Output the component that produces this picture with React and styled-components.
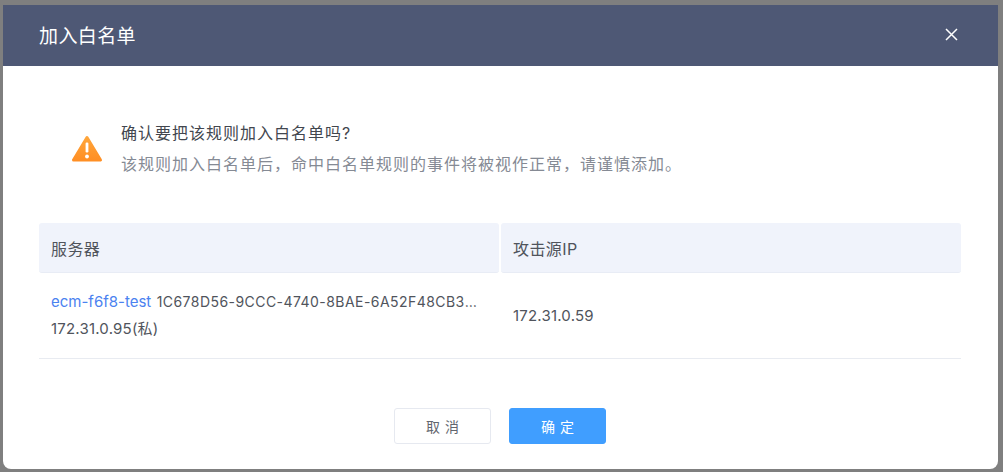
import React from "react";
import styled, { createGlobalStyle } from "styled-components";

const GlobalStyle = createGlobalStyle`
  html, body {
    margin: 0;
    padding: 0;
    height: 100%;
    background: #7f7f7f;
    font-family: "Inter", "Noto Sans CJK SC", sans-serif;
  }
`;

const Overlay = styled.div`
  box-sizing: border-box;
  width: 1003px;
  height: 472px;
  padding: 5px 5px 3px 3px;
  overflow: hidden;
`;
const Modal = styled.div`
  display: flex;
  flex-direction: column;
  width: 995px;
  height: 464px;
  background: #fff;
  border-radius: 0 0 8px 8px;
  overflow: hidden;
`;
const Header = styled.div`
  flex: none;
  display: flex;
  align-items: center;
  justify-content: space-between;
  box-sizing: border-box;
  height: 61px;
  padding: 0 40px 2px 36px;
  background: #4e5875;
  color: #fff;
`;
const Title = styled.div`
  font-size: 19px;
  letter-spacing: 0.4px;
`;
const Close = styled.button`
  display: flex;
  padding: 0;
  border: none;
  background: none;
  cursor: pointer;
`;
const Body = styled.div`
  flex: 1;
  padding: 0 37px 0 36px;
`;
const Notice = styled.div`
  display: flex;
  align-items: center;
  gap: 18px;
  box-sizing: border-box;
  height: 157px;
  padding: 8px 0 0 32px;
`;
const NoticeText = styled.div`
  display: flex;
  flex-direction: column;
  gap: 9px;
  font-size: 16px;
  line-height: 22px;
  letter-spacing: 1px;
`;
const Heading = styled.div`
  color: #42464e;
`;
const Hint = styled.div`
  color: #858a94;
`;
const Table = styled.div`
  display: grid;
  grid-template-columns: 461px 461px;
  width: 922px;
`;
const HeadCell = styled.div`
  display: flex;
  align-items: center;
  height: 50px;
  box-sizing: border-box;
  padding: 0 12px;
  background: #f0f3fb;
  border-bottom: 1px solid #e8ecf5;
  border-radius: 3px;
  font-size: 16px;
  letter-spacing: 0.4px;
  color: #50545c;
  margin-right: ${(p) => (p.$gap ? "1px" : "0")};
  margin-left: ${(p) => (p.$gap ? "0" : "1px")};
`;
const Cell = styled.div`
  display: flex;
  flex-direction: column;
  justify-content: center;
  gap: 11px;
  height: 86px;
  box-sizing: border-box;
  padding: 0 ${(p) => (p.$last ? "12px 0 13px" : "16px 0 12px")};
  border-bottom: 1px solid #e8ebf1;
  font-size: 14px;
  line-height: 16px;
  color: #50545c;
`;
const Line = styled.div`
  white-space: nowrap;
  overflow: hidden;
  text-overflow: ellipsis;
  letter-spacing: 0.45px;
`;
const Address = styled.div`
  font-size: 15px;
  letter-spacing: 0.2px;
`;
const ServerLink = styled.span`
  margin-right: 1px;
  color: #4b82f0;
  font-size: 15px;
  letter-spacing: 0;
`;
const Footer = styled.div`
  flex: none;
  display: flex;
  justify-content: center;
  gap: 18px;
  height: 61px;
  padding-right: 1px;
`;
const Button = styled.button`
  width: 97px;
  height: 36px;
  box-sizing: border-box;
  padding: 0 0 0 5px;
  border-radius: 3px;
  border: 1px solid ${(p) => (p.$primary ? "#409eff" : "#e6e9f0")};
  background: ${(p) => (p.$primary ? "#409eff" : "#fff")};
  color: ${(p) => (p.$primary ? "#fff" : "#62666e")};
  font-family: inherit;
  font-size: 14px;
  letter-spacing: 5px;
  cursor: pointer;
`;

const WarningIcon = () => (
  <svg width="32" height="28" viewBox="0 0 32 28">
    <defs>
      <linearGradient id="warn" x1="0" y1="0" x2="0" y2="1">
        <stop offset="0" stopColor="#ffa53a" />
        <stop offset="1" stopColor="#ff8f24" />
      </linearGradient>
    </defs>
    <path
      d="M16 2.5 L29.5 25 H2.5 Z"
      fill="url(#warn)"
      stroke="url(#warn)"
      strokeWidth="3"
      strokeLinejoin="round"
    />
    <rect x="14.6" y="7.5" width="2.8" height="10" rx="1.2" fill="#fff" />
    <circle cx="16" cy="21.5" r="1.9" fill="#fff" />
  </svg>
);

const CloseIcon = () => (
  <svg width="13" height="13" viewBox="0 0 13 13">
    <path d="M1 1 L12 12 M12 1 L1 12" stroke="#fff" strokeWidth="1.5" fill="none" />
  </svg>
);

const App = () => {
  return (
    <>
      <GlobalStyle />
      <Overlay>
        <Modal>
          <Header>
            <Title>加入白名单</Title>
            <Close>
              <CloseIcon />
            </Close>
          </Header>
          <Body>
            <Notice>
              <WarningIcon />
              <NoticeText>
                <Heading>确认要把该规则加入白名单吗?</Heading>
                <Hint>该规则加入白名单后，命中白名单规则的事件将被视作正常，请谨慎添加。</Hint>
              </NoticeText>
            </Notice>
            <Table>
              <HeadCell $gap>服务器</HeadCell>
              <HeadCell>攻击源IP</HeadCell>
              <Cell>
                <Line>
                  <ServerLink>ecm-f6f8-test</ServerLink> 1C678D56-9CCC-4740-8BAE-6A52F48CB3A19
                </Line>
                <Address>172.31.0.95(私)</Address>
              </Cell>
              <Cell $last>
                <Address>172.31.0.59</Address>
              </Cell>
            </Table>
          </Body>
          <Footer>
            <Button>取消</Button>
            <Button $primary>确定</Button>
          </Footer>
        </Modal>
      </Overlay>
    </>
  );
};

export default App;
